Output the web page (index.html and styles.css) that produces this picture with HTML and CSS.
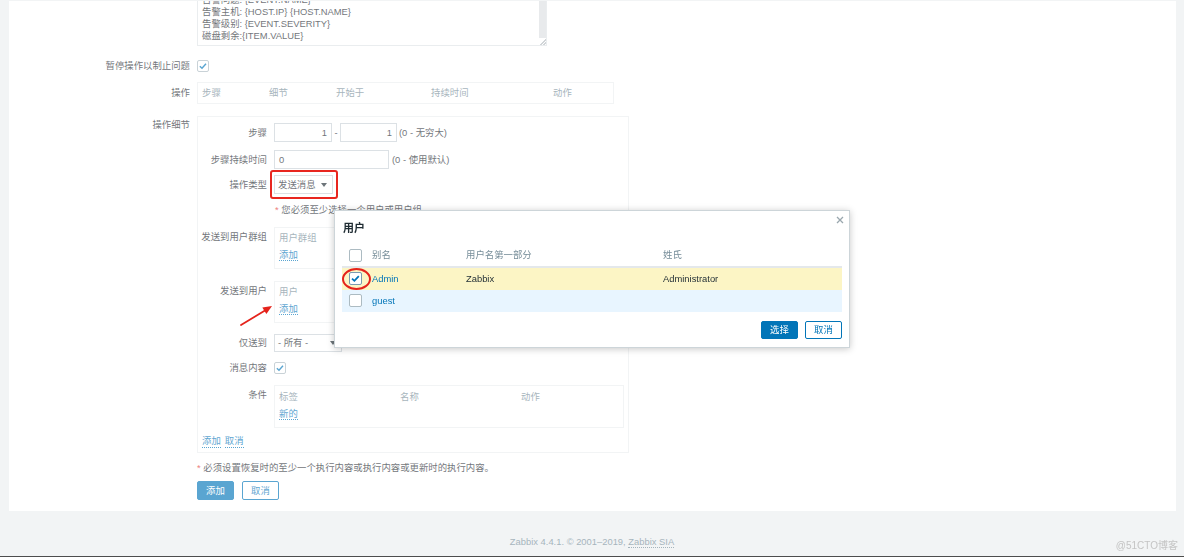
FILE: index.html
```html
<!DOCTYPE html>
<html lang="zh-CN">
<head>
<meta charset="utf-8">
<title>Zabbix 动作</title>
<link rel="stylesheet" href="styles.css">
</head>
<body>
<main class="panel">
  <div class="form">
    <div class="row r-text">
      <div class="label"></div>
      <div class="textarea">
        <div class="ta-text">
          <div>告警问题: {EVENT.NAME}</div>
          <div>告警主机: {HOST.IP} {HOST.NAME}</div>
          <div>告警级别: {EVENT.SEVERITY}</div>
          <div>磁盘剩余:{ITEM.VALUE}</div>
        </div>
        <div class="ta-scroll"><div class="ta-thumb"></div><div class="ta-grip"></div></div>
      </div>
    </div>

    <div class="row r-check">
      <div class="label">暂停操作以制止问题</div>
      <span class="cb"><svg viewBox="0 0 12 12" width="10" height="10"><path d="M2.2 6.2 L4.8 8.6 L9.6 3.4" fill="none" stroke="#0275b8" stroke-width="1.7"/></svg></span>
    </div>

    <div class="row r-ops">
      <div class="label">操作</div>
      <div class="ops-table">
        <span>步骤</span><span>细节</span><span>开始于</span><span>持续时间</span><span>动作</span>
      </div>
    </div>

    <div class="row r-details">
      <div class="label label-top">操作细节</div>
      <div class="details">
        <div class="drow d-steps">
          <div class="dlabel">步骤</div>
          <div class="field">
            <span class="input num w58">1</span><span class="dash">-</span><span class="input num w57">1</span><span class="hint">(0 - 无穷大)</span>
          </div>
        </div>
        <div class="drow d-duration">
          <div class="dlabel">步骤持续时间</div>
          <div class="field">
            <span class="input w115">0</span><span class="hint h3">(0 - 使用默认)</span>
          </div>
        </div>
        <div class="drow d-type">
          <div class="dlabel">操作类型</div>
          <div class="select w59">
            <span>发送消息</span>
            <svg class="caret" viewBox="0 0 6 4" width="6" height="4"><path d="M0 0 H6 L3 4 Z" fill="#1f2c33"/></svg>
            <span class="annot-box"></span>
          </div>
        </div>
        <div class="drow d-required">
          <div class="dlabel"></div>
          <div class="req"><span class="star">*</span> 您必须至少选择一个用户或用户组</div>
        </div>
        <div class="drow d-groups">
          <div class="dlabel label-top">发送到用户群组</div>
          <div class="ulist">
            <div class="muted">用户群组</div>
            <div class="ulink"><a class="link">添加</a></div>
          </div>
        </div>
        <div class="drow d-users">
          <div class="dlabel label-top">发送到用户</div>
          <div class="ulist">
            <div class="muted">用户</div>
            <div class="ulink"><a class="link">添加</a></div>
            <svg class="annot-arrow" viewBox="0 0 40 28" width="40" height="28">
              <line x1="4" y1="23" x2="28" y2="8.5" stroke="#e5231b" stroke-width="1.8" stroke-linecap="round"/>
              <polygon points="35,4 29.4,11.9 25.3,5.5" fill="#e5231b"/>
            </svg>
          </div>
        </div>
        <div class="drow d-only">
          <div class="dlabel">仅送到</div>
          <div class="select w68">
            <span>- 所有 -</span>
            <svg class="caret" viewBox="0 0 6 4" width="6" height="4"><path d="M0 0 H6 L3 4 Z" fill="#1f2c33"/></svg>
          </div>
        </div>
        <div class="drow d-msg">
          <div class="dlabel">消息内容</div>
          <span class="cb"><svg viewBox="0 0 12 12" width="10" height="10"><path d="M2.2 6.2 L4.8 8.6 L9.6 3.4" fill="none" stroke="#0275b8" stroke-width="1.7"/></svg></span>
        </div>
        <div class="drow d-cond">
          <div class="dlabel label-top">条件</div>
          <div class="cond">
            <div class="cond-head"><span>标签</span><span>名称</span><span>动作</span></div>
            <div class="ulink"><a class="link">新的</a></div>
          </div>
        </div>
        <div class="dlinks"><a class="link">添加</a><a class="link">取消</a></div>
      </div>
    </div>

    <div class="row r-note">
      <div class="label"></div>
      <div><span class="star">*</span> 必须设置恢复时的至少一个执行内容或执行内容或更新时的执行内容。</div>
    </div>

    <div class="row r-buttons">
      <div class="label"></div>
      <div class="btns">
        <button class="btn primary">添加</button>
        <button class="btn secondary">取消</button>
      </div>
    </div>
  </div>
</main>

<footer class="footer">Zabbix 4.4.1. © 2001–2019, <a class="flink">Zabbix SIA</a></footer>
<div class="bottom-line"></div>

<div class="overlay"></div>

<div class="modal">
  <button class="close" aria-label="关闭"><svg viewBox="0 0 8 8" width="8" height="8"><path d="M1 1 L7 7 M7 1 L1 7" stroke="#9aa7ae" stroke-width="1.3"/></svg></button>
  <div class="modal-title">用户</div>
  <table class="utable">
    <colgroup><col class="c1"><col class="c2"><col class="c3"><col class="c4"></colgroup>
    <thead>
      <tr><th class="cbcell"><span class="cb mcb"></span></th><th>别名</th><th>用户名第一部分</th><th>姓氏</th></tr>
    </thead>
    <tbody>
      <tr class="selected">
        <td class="cbcell"><span class="cb mcb checked"><svg viewBox="0 0 12 12" width="11" height="11"><path d="M2.2 6.2 L4.8 8.6 L9.6 3.4" fill="none" stroke="#0275b8" stroke-width="1.9"/></svg><span class="annot-ellipse"></span></span></td>
        <td><a class="mlink">Admin</a></td><td>Zabbix</td><td>Administrator</td>
      </tr>
      <tr class="hover">
        <td class="cbcell"><span class="cb mcb"></span></td>
        <td><a class="mlink">guest</a></td><td></td><td></td>
      </tr>
    </tbody>
  </table>
  <div class="modal-btns">
    <button class="btn primary mbtn">选择</button>
    <button class="btn secondary mbtn">取消</button>
  </div>
</div>

<div class="watermark">@51CTO博客</div>
</body>
</html>
```

FILE: styles.css
```css
* { box-sizing: border-box; }
html, body { margin: 0; }
body {
  background: #ebeef0;
  font-family: "Liberation Sans", "Noto Sans CJK SC", sans-serif;
  font-size: 9.4px;
  line-height: 12px;
  color: #1f2c33;
  padding-top: 1px;
  height: 557px;
  overflow: hidden;
}
.panel {
  margin-left: 9px;
  width: 1167px;
  background: #fff;
  padding-bottom: 11px;
}
.row { display: flex; gap: 7px; }
.label { width: 181px; flex: none; text-align: right; }
.label-top { padding-top: 3px; }

/* textarea (scrolled) */
.textarea {
  width: 350px;
  height: 45px;
  border: 1px solid #dfe4e7;
  border-top: none;
  display: flex;
  overflow: hidden;
}
.ta-text {
  flex: 1;
  display: flex;
  flex-direction: column;
  justify-content: flex-end;
  padding: 0 4px 3px 4px;
  white-space: nowrap;
}
.ta-scroll { width: 7px; display: flex; flex-direction: column; }
.ta-thumb { flex: 1; background: #dcdfe2; }
.ta-grip {
  height: 7px;
  background: linear-gradient(135deg, transparent 55%, #b9bfc3 55%, #b9bfc3 65%, transparent 65%, transparent 78%, #b9bfc3 78%, #b9bfc3 88%, transparent 88%);
}

.r-check { margin-top: 14px; align-items: center; height: 12px; }
.r-ops { margin-top: 10px; align-items: center; }
.r-details { margin-top: 12px; align-items: flex-start; }
.r-note { margin-top: 9px; }
.r-buttons { margin-top: 7px; }

.cb {
  width: 12px;
  height: 12px;
  border: 1px solid #acbbc2;
  border-radius: 2px;
  background: #fff;
  display: inline-flex;
  align-items: center;
  justify-content: center;
  flex: none;
}

.ops-table {
  width: 417px;
  height: 22px;
  border: 1px solid #ebeef0;
  display: grid;
  grid-template-columns: 67px 67px 95px 122px 1fr;
  align-items: center;
  padding-left: 4px;
  color: #768d99;
}

.details {
  width: 432px;
  border: 1px solid #ebeef0;
  padding: 6px 0 4px 0;
}
.drow { display: flex; gap: 7px; align-items: center; }
.dlabel { width: 69px; flex: none; text-align: right; }
.d-steps { height: 19px; }
.d-duration { margin-top: 8px; height: 19px; }
.d-type { margin-top: 6px; height: 19px; }
.d-required { margin-top: 10px; }
.d-groups { margin-top: 11px; align-items: flex-start; }
.d-users { margin-top: 12px; align-items: flex-start; }
.d-users .label-top, .d-groups .label-top { padding-top: 4px; }
.d-only { margin-top: 11px; height: 18px; }
.d-msg { margin-top: 10px; height: 12px; }
.d-cond { margin-top: 11px; align-items: flex-start; }
.d-cond .label-top { padding-top: 4px; }

.field { display: flex; align-items: center; height: 19px; }
.input {
  height: 19px;
  border: 1px solid #c9d2d7;
  background: #fff;
  padding: 0 4px;
  display: flex;
  align-items: center;
}
.num { justify-content: flex-end; }
.w58 { width: 58px; }
.w57 { width: 57px; }
.w115 { width: 115px; }
.dash { width: 8px; text-align: center; }
.hint { margin-left: 2px; }
.h3 { margin-left: 3px; }

.select {
  position: relative;
  height: 19px;
  border: 1px solid #c9d2d7;
  background: #fff;
  display: flex;
  align-items: center;
  justify-content: space-between;
  padding: 0 5px 0 3px;
}
.d-only .select { height: 18px; }
.w59 { width: 59px; }
.w68 { width: 68px; }
.caret { flex: none; }
.annot-box {
  position: absolute;
  left: -5px;
  right: -6px;
  top: -6px;
  bottom: -6px;
  border: 2px solid #e8261f;
  border-radius: 3px;
  z-index: 15;
}

.req { white-space: nowrap; padding-left: 1px; }
.star { color: #e33734; }

.ulist {
  position: relative;
  width: 350px;
  height: 42px;
  border: 1px solid #ebeef0;
  padding: 4px 4px 0 4px;
}
.muted { color: #768d99; }
.ulink { margin-top: 5px; }
.link {
  color: #0275b8;
  border-bottom: 1px dotted #0275b8;
  text-decoration: none;
  cursor: pointer;
}
.annot-arrow {
  position: absolute;
  left: -38px;
  top: 20px;
  z-index: 15;
}

.cond {
  width: 350px;
  height: 43px;
  border: 1px solid #ebeef0;
  padding: 5px 4px 0 4px;
}
.cond-head {
  display: grid;
  grid-template-columns: 121px 121px 1fr;
  color: #768d99;
}
.dlinks {
  margin-top: 7px;
  padding-left: 4px;
  display: flex;
  gap: 4px;
}

.btns { display: flex; gap: 8px; }
.btn {
  font: inherit;
  width: 37px;
  height: 19px;
  padding: 0;
  border-radius: 2px;
  border: 1px solid #0275b8;
  cursor: pointer;
}
.primary { background: #0275b8; color: #fff; }
.secondary { background: #fff; color: #0275b8; }

.footer {
  padding-top: 25px;
  text-align: center;
  color: #768d99;
}
.flink { color: #768d99; border-bottom: 1px dotted #768d99; }
.bottom-line {
  position: relative;
  z-index: 12;
  margin-top: 8px;
  height: 2px;
  background: #4d4d4d;
}

.overlay {
  position: fixed;
  inset: 0;
  background: rgba(255, 255, 255, 0.35);
  z-index: 10;
}

.modal {
  position: absolute;
  left: 334px;
  top: 210px;
  width: 516px;
  background: #fff;
  border: 1px solid #cdd5d9;
  box-shadow: 0 1px 7px rgba(0, 0, 0, 0.22);
  padding: 10px 7px 8px 7px;
  z-index: 20;
}
.close {
  position: absolute;
  top: 4px;
  right: 4px;
  width: 10px;
  height: 10px;
  padding: 0;
  border: 0;
  background: none;
  display: flex;
  align-items: center;
  justify-content: center;
}
.modal-title {
  font-size: 11px;
  font-weight: bold;
  line-height: 14px;
  padding-left: 1px;
}
.utable {
  margin-top: 9.5px;
  width: 500px;
  border-collapse: collapse;
  table-layout: fixed;
}
.c1 { width: 25px; }
.c2 { width: 94px; }
.c3 { width: 197px; }
.utable th {
  height: 22px;
  font-weight: normal;
  text-align: left;
  color: #768d99;
  padding: 0 0 0 5px;
  border-bottom: 2px solid #e4e8eb;
}
.utable td { padding: 0 0 0 5px; }
.utable th.cbcell, .utable td.cbcell { padding-left: 7px; }
.selected td { background: #fcf5c5; height: 23px; }
.hover td { background: #e8f5ff; height: 22px; }
.mcb { width: 13px; height: 13px; vertical-align: middle; }
.checked { position: relative; border-color: #7a9bb0; }
.annot-ellipse {
  position: absolute;
  left: -8px;
  top: -5px;
  width: 29px;
  height: 22px;
  border: 2px solid #e5231b;
  border-radius: 50%;
}
.mlink { color: #0275b8; text-decoration: none; }
.modal-btns {
  margin-top: 9px;
  display: flex;
  justify-content: flex-end;
  gap: 7px;
}
.mbtn { height: 18px; }

.watermark {
  position: absolute;
  right: 6px;
  bottom: 5px;
  font-size: 10px;
  line-height: 12px;
  color: #c4c4c4;
  z-index: 12;
}
```
